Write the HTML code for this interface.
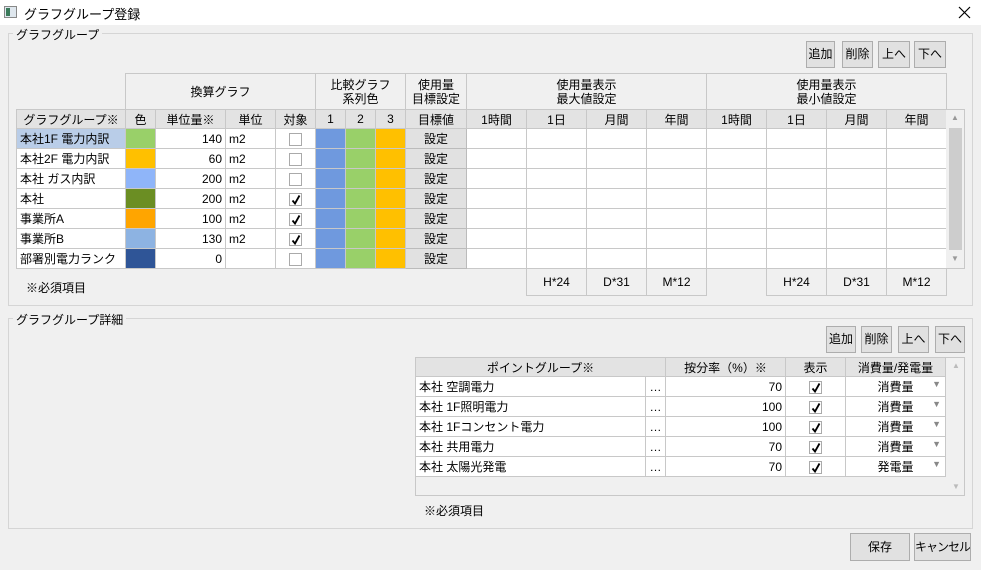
<!DOCTYPE html><html><head><meta charset="utf-8"><style>
*{box-sizing:border-box;margin:0;padding:0}
html,body{width:981px;height:570px;overflow:hidden}
body{background:#f0f0f0;font-family:"Liberation Sans","Noto Sans CJK JP",sans-serif;font-size:12px;color:#000;position:relative}
.a{position:absolute}
.btn{position:absolute;background:#e1e1e1;border:1px solid #adadad;text-align:center;font-size:12px;white-space:nowrap;overflow:hidden}
.gb{position:absolute;border:1px solid #d5d5d5}
.gl{position:absolute;background:#f0f0f0;padding:0 3px;font-size:12px}
table{border-collapse:collapse;table-layout:fixed;position:absolute}
td{border:1px solid #c8c8c8;height:20px;padding:0 3px;white-space:nowrap;overflow:hidden;background:#fff;font-size:12px}
tr.h td{background:#e3e3e3;text-align:center;height:19px}
.r{text-align:right}.c{text-align:center}
.cb{display:inline-block;width:13px;height:13px;border:1px solid #aaa;background:#fff;vertical-align:middle;position:relative}
.cb svg{position:absolute;left:0;top:0}
.set{background:#e1e1e1!important;text-align:center;border:1px solid #bbb}
.g td{background:#f0f0f0;text-align:center;line-height:14px}
.dd{position:absolute;right:4px;top:2px;font-size:9px;color:#888}
</style></head><body>
<div class="a" style="left:0;top:0;width:981px;height:25px;background:#fff"></div>
<div class="a" style="left:4px;top:6px;width:13px;height:12px;border:1px solid #888;background:#dfe7ee"><div class="a" style="left:1px;top:1px;width:4px;height:8px;background:#3a7a5a"></div></div>
<div class="a" style="left:24px;top:4px;font-size:13px">グラフグループ登録</div>
<svg class="a" style="left:958px;top:6px" width="13" height="13"><path d="M1 1L12 12M12 1L1 12" stroke="#000" stroke-width="1.2"/></svg>

<div class="gb" style="left:8px;top:33px;width:965px;height:273px"></div>
<div class="gl" style="left:13px;top:26px">グラフグループ</div>
<div class="btn" style="left:806px;top:41px;width:29px;height:27px;line-height:25px">追加</div>
<div class="btn" style="left:842px;top:41px;width:31px;height:27px;line-height:25px">削除</div>
<div class="btn" style="left:878px;top:41px;width:32px;height:27px;line-height:25px">上へ</div>
<div class="btn" style="left:914px;top:41px;width:32px;height:27px;line-height:25px">下へ</div>

<table class="g" style="left:125px;top:73px;width:821px">
<colgroup><col style="width:190px"><col style="width:90px"><col style="width:61px"><col style="width:240px"><col style="width:240px"></colgroup>
<tr><td style="height:37px">換算グラフ</td><td>比較グラフ<br>系列色</td><td>使用量<br>目標設定</td><td>使用量表示<br>最大値設定</td><td>使用量表示<br>最小値設定</td></tr></table>

<table style="left:16px;top:109px;width:930px">
<colgroup><col style="width:109px"><col style="width:30px"><col style="width:70px"><col style="width:50px"><col style="width:40px"><col style="width:30px"><col style="width:30px"><col style="width:30px"><col style="width:61px"><col style="width:60px"><col style="width:60px"><col style="width:60px"><col style="width:60px"><col style="width:60px"><col style="width:60px"><col style="width:60px"><col style="width:60px"></colgroup>
<tr class="h"><td>グラフグループ※</td><td>色</td><td>単位量※</td><td>単位</td><td>対象</td><td>1</td><td>2</td><td>3</td><td>目標値</td><td>1時間</td><td>1日</td><td>月間</td><td>年間</td><td>1時間</td><td>1日</td><td>月間</td><td>年間</td></tr>
<tr><td style="background:#b9cde8">本社1F 電力内訳</td><td style="background:#99d069"></td><td class="r">140</td><td>m2</td><td class="c"><span class="cb"></span></td><td style="background:#6f99de"></td><td style="background:#99d069"></td><td style="background:#ffc000"></td><td class="set">設定</td><td></td><td></td><td></td><td></td><td></td><td></td><td></td><td></td></tr>
<tr><td>本社2F 電力内訳</td><td style="background:#ffc000"></td><td class="r">60</td><td>m2</td><td class="c"><span class="cb"></span></td><td style="background:#6f99de"></td><td style="background:#99d069"></td><td style="background:#ffc000"></td><td class="set">設定</td><td></td><td></td><td></td><td></td><td></td><td></td><td></td><td></td></tr>
<tr><td>本社 ガス内訳</td><td style="background:#8fb5f9"></td><td class="r">200</td><td>m2</td><td class="c"><span class="cb"></span></td><td style="background:#6f99de"></td><td style="background:#99d069"></td><td style="background:#ffc000"></td><td class="set">設定</td><td></td><td></td><td></td><td></td><td></td><td></td><td></td><td></td></tr>
<tr><td>本社</td><td style="background:#6b8e23"></td><td class="r">200</td><td>m2</td><td class="c"><span class="cb"><svg width="12" height="12"><path d="M2.5 6.5L5 9.5L9.5 1.5" stroke="#000" stroke-width="1.8" fill="none"/></svg></span></td><td style="background:#6f99de"></td><td style="background:#99d069"></td><td style="background:#ffc000"></td><td class="set">設定</td><td></td><td></td><td></td><td></td><td></td><td></td><td></td><td></td></tr>
<tr><td>事業所A</td><td style="background:#ffa500"></td><td class="r">100</td><td>m2</td><td class="c"><span class="cb"><svg width="12" height="12"><path d="M2.5 6.5L5 9.5L9.5 1.5" stroke="#000" stroke-width="1.8" fill="none"/></svg></span></td><td style="background:#6f99de"></td><td style="background:#99d069"></td><td style="background:#ffc000"></td><td class="set">設定</td><td></td><td></td><td></td><td></td><td></td><td></td><td></td><td></td></tr>
<tr><td>事業所B</td><td style="background:#8db3e2"></td><td class="r">130</td><td>m2</td><td class="c"><span class="cb"><svg width="12" height="12"><path d="M2.5 6.5L5 9.5L9.5 1.5" stroke="#000" stroke-width="1.8" fill="none"/></svg></span></td><td style="background:#6f99de"></td><td style="background:#99d069"></td><td style="background:#ffc000"></td><td class="set">設定</td><td></td><td></td><td></td><td></td><td></td><td></td><td></td><td></td></tr>
<tr><td>部署別電力ランク</td><td style="background:#2f5597"></td><td class="r">0</td><td></td><td class="c"><span class="cb"></span></td><td style="background:#6f99de"></td><td style="background:#99d069"></td><td style="background:#ffc000"></td><td class="set">設定</td><td></td><td></td><td></td><td></td><td></td><td></td><td></td><td></td></tr>
</table>
<div class="a" style="left:946px;top:109px;width:19px;height:160px;border:1px solid #c8c8c8;border-left:none;background:#f0f0f0"></div>
<div class="a" style="left:949px;top:128px;width:13px;height:122px;background:#cdcdcd"></div>
<div class="a" style="left:951px;top:113px;font-size:8px;color:#999">▲</div>
<div class="a" style="left:951px;top:254px;font-size:8px;color:#999">▼</div>

<table class="g" style="left:526px;top:268px;width:180px"><colgroup><col style="width:60px"><col style="width:60px"><col style="width:60px"></colgroup><tr><td style="height:27px">H*24</td><td>D*31</td><td>M*12</td></tr></table>
<table class="g" style="left:766px;top:268px;width:180px"><colgroup><col style="width:60px"><col style="width:60px"><col style="width:60px"></colgroup><tr><td style="height:27px">H*24</td><td>D*31</td><td>M*12</td></tr></table>
<div class="a" style="left:26px;top:279px">※必須項目</div>

<div class="gb" style="left:8px;top:318px;width:965px;height:211px"></div>
<div class="gl" style="left:13px;top:311px">グラフグループ詳細</div>
<div class="btn" style="left:826px;top:326px;width:30px;height:27px;line-height:25px">追加</div>
<div class="btn" style="left:861px;top:326px;width:31px;height:27px;line-height:25px">削除</div>
<div class="btn" style="left:898px;top:326px;width:31px;height:27px;line-height:25px">上へ</div>
<div class="btn" style="left:935px;top:326px;width:30px;height:27px;line-height:25px">下へ</div>

<div class="a" style="left:415px;top:357px;width:550px;height:139px;border:1px solid #c8c8c8;background:#f0f0f0"></div>
<table style="left:415px;top:357px;width:530px">
<colgroup><col style="width:230px"><col style="width:20px"><col style="width:120px"><col style="width:60px"><col style="width:100px"></colgroup>
<tr class="h"><td colspan="2">ポイントグループ※</td><td>按分率（%）※</td><td>表示</td><td>消費量/発電量</td></tr>
<tr><td>本社 空調電力</td><td class="c" style="padding:0">…</td><td class="r">70</td><td class="c"><span class="cb"><svg width="12" height="12"><path d="M2.5 6.5L5 9.5L9.5 1.5" stroke="#000" stroke-width="1.8" fill="none"/></svg></span></td><td class="c" style="position:relative">消費量<span class="dd">▼</span></td></tr>
<tr><td>本社 1F照明電力</td><td class="c" style="padding:0">…</td><td class="r">100</td><td class="c"><span class="cb"><svg width="12" height="12"><path d="M2.5 6.5L5 9.5L9.5 1.5" stroke="#000" stroke-width="1.8" fill="none"/></svg></span></td><td class="c" style="position:relative">消費量<span class="dd">▼</span></td></tr>
<tr><td>本社 1Fコンセント電力</td><td class="c" style="padding:0">…</td><td class="r">100</td><td class="c"><span class="cb"><svg width="12" height="12"><path d="M2.5 6.5L5 9.5L9.5 1.5" stroke="#000" stroke-width="1.8" fill="none"/></svg></span></td><td class="c" style="position:relative">消費量<span class="dd">▼</span></td></tr>
<tr><td>本社 共用電力</td><td class="c" style="padding:0">…</td><td class="r">70</td><td class="c"><span class="cb"><svg width="12" height="12"><path d="M2.5 6.5L5 9.5L9.5 1.5" stroke="#000" stroke-width="1.8" fill="none"/></svg></span></td><td class="c" style="position:relative">消費量<span class="dd">▼</span></td></tr>
<tr><td>本社 太陽光発電</td><td class="c" style="padding:0">…</td><td class="r">70</td><td class="c"><span class="cb"><svg width="12" height="12"><path d="M2.5 6.5L5 9.5L9.5 1.5" stroke="#000" stroke-width="1.8" fill="none"/></svg></span></td><td class="c" style="position:relative">発電量<span class="dd">▼</span></td></tr>
</table>
<div class="a" style="left:952px;top:361px;font-size:8px;color:#bbb">▲</div>
<div class="a" style="left:952px;top:482px;font-size:8px;color:#bbb">▼</div>
<div class="a" style="left:424px;top:502px">※必須項目</div>

<div class="btn" style="left:850px;top:533px;width:60px;height:28px;line-height:26px">保存</div>
<div class="btn" style="left:914px;top:533px;width:57px;height:28px;line-height:26px;letter-spacing:-1px">キャンセル</div>
</body></html>
